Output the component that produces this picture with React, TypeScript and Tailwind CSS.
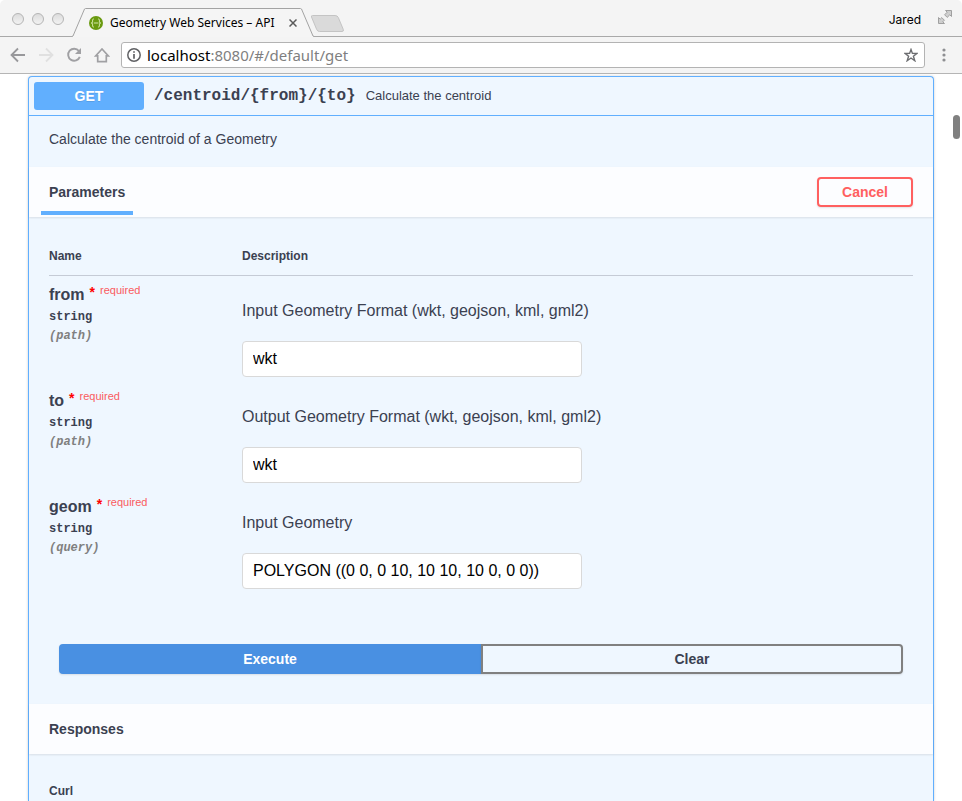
import { useState } from "react";

const PARAMS = [
  { name: "from", where: "path", text: "Input Geometry Format (wkt, geojson, kml, gml2)", value: "wkt" },
  { name: "to", where: "path", text: "Output Geometry Format (wkt, geojson, kml, gml2)", value: "wkt" },
  { name: "geom", where: "query", text: "Input Geometry", value: "POLYGON ((0 0, 0 10, 10 10, 10 0, 0 0))" },
];

function TabStrip() {
  return (
    <div className="flex h-[37px] items-end border-b border-[#a9a9a9] bg-[#f4f4f4] pl-3">
      <div className="flex gap-2 pb-[11px]">
        {["Close", "Minimise", "Zoom"].map((label) => (
          <button key={label} aria-label={label} className="size-3 rounded-full border border-[#b4b4b4] bg-linear-to-b from-[#dcdcdc] to-[#f2f2f2]" />
        ))}
      </div>
      <div className="relative -mb-px ml-2 flex h-[29px] w-[242px] items-center pl-[17px]">
        <svg className="absolute inset-0" width="242" height="29" viewBox="0 0 242 29" aria-hidden="true">
          <path d="M0 29 V28.5 L1 28 L12.5 1 L13.5 .5 H228.5 L229.5 1 L241 28 L242 28.5 V29 Z" fill="#f5f5f5" />
          <path d="M0 28.5 L1 28 L12.5 1 L13.5 .5 H228.5 L229.5 1 L241 28 L242 28.5" fill="none" stroke="#a3a3a3" />
        </svg>
        <svg className="relative" width="14" height="14" viewBox="0 0 14 14" aria-hidden="true">
          <circle cx="7" cy="7" r="7" fill="#6a9a10" />
          <path d="M5 3 H4.5 Q3.6 3 3.6 4 V6 Q3.6 7 2.2 7 Q3.6 7 3.6 8 V10 Q3.6 11 4.5 11 H5 M9 3 H9.5 Q10.4 3 10.4 4 V6 Q10.4 7 11.8 7 Q10.4 7 10.4 8 V10 Q10.4 11 9.5 11 H9" fill="none" stroke="#d3e6a6" />
          <path d="M4.8 7 H9.4" stroke="#d3e6a6" strokeWidth="1.1" />
        </svg>
        <span className="relative ml-[7px] flex-1 whitespace-nowrap font-['Noto_Sans',sans-serif] text-xs text-black">Geometry Web Services – API</span>
        <button aria-label="Close tab" className="relative mr-[17px]">
          <svg width="8" height="8" viewBox="0 0 8 8" fill="none" stroke="#5a5a5a" strokeWidth="1.5"><path d="M.5 .5 L7.5 7.5 M7.5 .5 L.5 7.5" /></svg>
        </button>
      </div>
      <button aria-label="New tab" className="-ml-1 mb-[3px]">
        <svg width="35" height="18" viewBox="0 0 35 18"><path d="M2.5 .5 H25 Q27.5 .5 28.3 2.5 L33.3 14.5 Q34 16.5 32 16.5 H9.5 Q7.5 16.5 6.7 14.5 L1.5 2 Q1 .5 2.5 .5 Z" fill="#dadada" stroke="#c4c4c4" /></svg>
      </button>
      <div className="ml-auto flex items-end gap-4 pr-[9px] pb-[8px]">
        <span className="font-[Inter,sans-serif] text-xs leading-[17px] text-black">Jared</span>
        <svg className="mb-[3px]" width="16" height="16" viewBox="0 0 16 16" fill="#cfcfcf" stroke="#a0a0a0" strokeWidth="1" aria-hidden="true">
          <path d="M8.5 1.5 H14.5 V7.5 L12.8 5.8 L10.2 8.4 L7.6 5.8 L10.2 3.2 Z" />
          <path d="M7.5 14.5 H1.5 V8.5 L3.2 10.2 L4.8 8.6 L7.4 11.2 L5.8 12.8 Z" />
        </svg>
      </div>
    </div>
  );
}

function Toolbar() {
  return (
    <div className="flex h-[37px] items-center border-b border-[#b5b5b5] bg-[#f4f4f4] pl-[10px]">
      <div className="flex items-center gap-3">
        <button aria-label="Back"><svg width="16" height="16" viewBox="0 0 16 16" fill="none" stroke="#98989b" strokeWidth="1.8"><path d="M15 8 H2.5 M8 1.5 L1.5 8 L8 14.5" /></svg></button>
        <button aria-label="Forward"><svg width="16" height="16" viewBox="0 0 16 16" fill="none" stroke="#e0e0e0" strokeWidth="1.8"><path d="M1 8 H13.5 M8 1.5 L14.5 8 L8 14.5" /></svg></button>
        <button aria-label="Reload">
          <svg width="16" height="16" viewBox="0 0 16 16"><path d="M12.9 4 A6 6 0 1 0 13.8 9.8" fill="none" stroke="#a0a0a3" strokeWidth="1.9" /><path d="M15 1 V7 H9 Z" fill="#a0a0a3" /></svg>
        </button>
        <button aria-label="Home"><svg width="16" height="16" viewBox="0 0 16 16" fill="none" stroke="#a0a0a3" strokeWidth="1.7"><path d="M1.8 8.8 L8 2 L14.2 8.8 H12.3 V14.7 H3.7 V8.8 Z" /></svg></button>
      </div>
      <div className="ml-[11px] flex h-[26px] flex-1 items-center rounded-[3px] border border-[#b3b3b3] bg-white pr-[6px] pl-[5px]">
        <svg width="14" height="14" viewBox="0 0 14 14" aria-hidden="true"><circle cx="7" cy="7" r="6.2" fill="none" stroke="#606164" strokeWidth="1.5" /><path d="M7 3.2 V4.8 M7 6 V10.8" stroke="#606164" strokeWidth="1.7" /></svg>
        <a href="#/default/get" className="ml-[6px] flex-1 font-['Noto_Sans',sans-serif] text-[15px] leading-5 text-[#7f7f7f]"><span className="text-black">localhost</span>:8080/#/default/get</a>
        <button aria-label="Bookmark this page">
          <svg width="14" height="14" viewBox="0 0 14 14" fill="none" stroke="#6c6d70" strokeWidth="1.4"><path d="M7 1.5 L8.4 5.4 L12.9 5.5 L9.4 8.2 L10.8 12.7 L7 10 L3.2 12.7 L4.6 8.2 L1.1 5.5 L5.6 5.4 Z" /></svg>
        </button>
      </div>
      <button aria-label="Menu" className="mr-4 ml-[17px]">
        <svg width="4" height="14" viewBox="0 0 4 14" fill="#8e8f92"><circle cx="2" cy="2" r="1.6" /><circle cx="2" cy="7" r="1.6" /><circle cx="2" cy="12" r="1.6" /></svg>
      </button>
    </div>
  );
}

function ParamRow({ name, where, text, value }: (typeof PARAMS)[number]) {
  const [current, setCurrent] = useState(value);
  return (
    <tr className="align-top">
      <td className="pt-[11px]">
        <div className="flex h-4 text-base leading-4 font-bold">
          {name}
          <span className="ml-[5px] text-sm leading-[10px] text-[#ff0000]">*</span>
          <span className="ml-[5px] text-[11px] leading-[6px] font-normal text-[#fa5b60]">required</span>
        </div>
        <div className="mt-[7px] font-['Liberation_Mono',monospace] text-xs leading-[14px] font-bold">string</div>
        <div className="mt-[5px] font-['Liberation_Mono',monospace] text-xs leading-[14px] font-bold text-[#808080] italic">({where})</div>
      </td>
      <td className="pt-[26px] pb-[5px]">
        <label htmlFor={name} className="block text-base leading-[18px]">{text}</label>
        <input id={name} value={current} onChange={(e) => setCurrent(e.target.value)} className="mt-[21px] block h-9 w-full max-w-[340px] rounded-[4px] border border-[#d9d9d9] bg-white px-[10px] text-base text-black" />
      </td>
    </tr>
  );
}

export default function App() {
  return (
    <div className="flex min-h-screen flex-col bg-white font-['Liberation_Sans',sans-serif] text-[#3b4151]">
      <header className="overflow-hidden rounded-t-[5px]">
        <TabStrip />
        <Toolbar />
      </header>
      <main className="relative flex flex-1 flex-col px-7 pt-[2px]">
        <section className="flex-1 rounded-t-[4px] border border-b-0 border-[#61affe] bg-[#eff7ff] shadow-[0_0_3px_rgba(0,0,0,0.19)]">
          <div className="flex h-[39px] items-center border-b border-[#61affe] px-[5px]">
            <button className="h-7 w-[110px] rounded-[3px] bg-[#61affe] text-sm font-bold text-white text-shadow-[0_1px_0_rgba(0,0,0,0.1)]">GET</button>
            <span className="ml-[10px] font-['Liberation_Mono',monospace] text-base font-bold">/centroid/&#123;from&#125;/&#123;to&#125;</span>
            <span className="ml-[10px] text-[13px]">Calculate the centroid</span>
          </div>
          <p className="px-5 pt-[15px] pb-[20px] text-sm leading-4">Calculate the centroid of a Geometry</p>
          <div className="flex h-[50px] items-center justify-between bg-[#fcfdff] px-5 shadow-[0_1px_2px_rgba(0,0,0,0.1)]">
            <h4 className="-ml-2 flex h-12 items-center self-start border-b-4 border-[#61affe] px-2 pt-[6px] text-sm font-bold">Parameters</h4>
            <button className="h-[30px] w-24 rounded-[4px] border-2 border-[#ff6060] text-sm font-bold text-[#ff6060] shadow-[0_1px_2px_rgba(0,0,0,0.1)]">Cancel</button>
          </div>
          <div className="px-5 pt-5">
            <table className="w-full table-fixed border-collapse">
              <thead>
                <tr className="border-b border-[#c5cbd6] text-left text-xs">
                  <th className="h-[38px] w-[193px] pt-px">Name</th>
                  <th className="pt-px">Description</th>
                </tr>
              </thead>
              <tbody>
                {PARAMS.map((p) => (
                  <ParamRow key={p.name} {...p} />
                ))}
              </tbody>
            </table>
          </div>
          <div className="flex px-[30px] pt-[50px] pb-[30px] text-sm font-bold">
            <button className="h-[30px] flex-1 rounded-l-[4px] border-2 border-[#4990e2] bg-[#4990e2] text-white shadow-[0_1px_2px_rgba(0,0,0,0.1)]">Execute</button>
            <button className="h-[30px] flex-1 rounded-r-[4px] border-2 border-[#808080] shadow-[0_1px_2px_rgba(0,0,0,0.1)]">Clear</button>
          </div>
          <div className="flex h-[50px] items-center bg-[#fcfdff] px-5 shadow-[0_1px_2px_rgba(0,0,0,0.1)]">
            <h4 className="text-sm font-bold">Responses</h4>
          </div>
          <h4 className="px-5 pt-[29px] text-xs leading-4 font-bold">Curl</h4>
        </section>
        <div className="absolute top-[41px] right-[2px] h-6 w-[7px] rounded-full bg-[#808080]" />
      </main>
    </div>
  );
}
